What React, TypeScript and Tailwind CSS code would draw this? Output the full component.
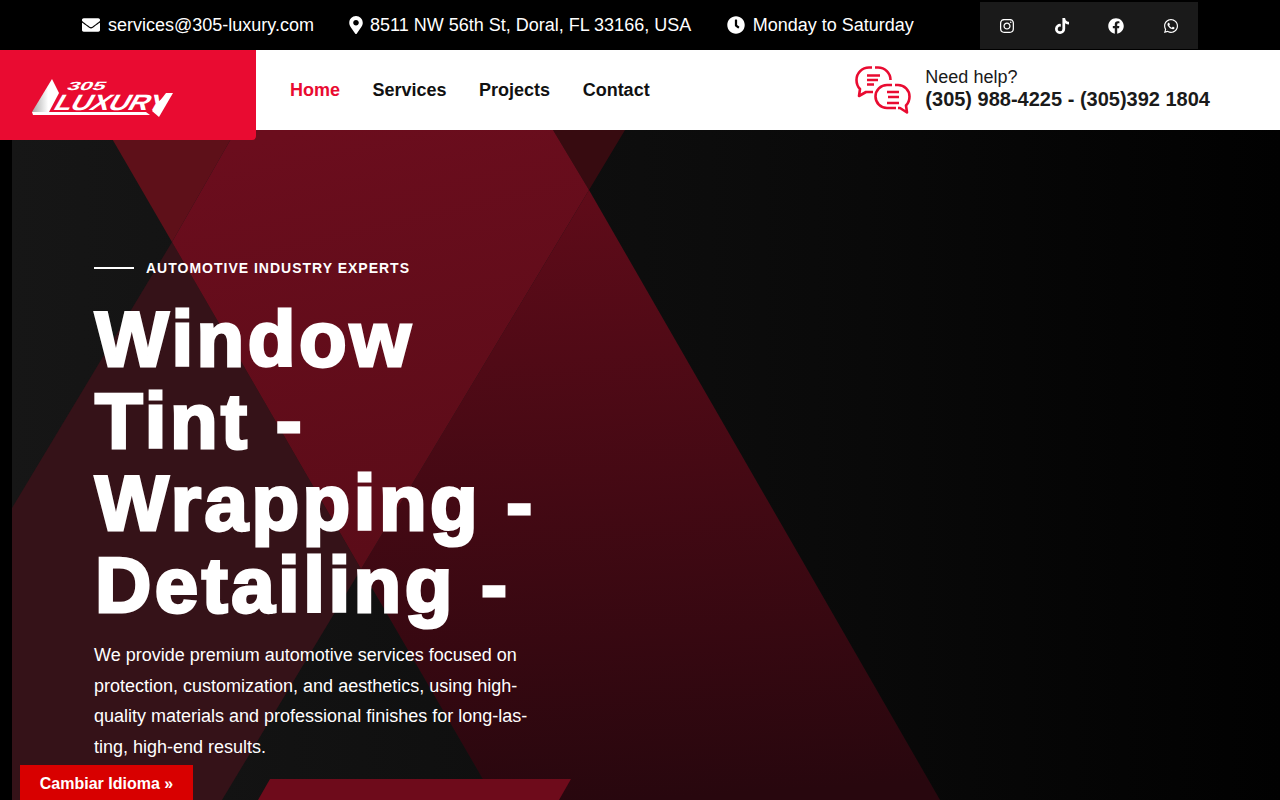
import { FaEnvelope, FaMapMarkerAlt, FaClock, FaInstagram, FaTiktok, FaFacebook, FaWhatsapp } from 'react-icons/fa'

const FONT = { fontFamily: '"Liberation Sans", Arial, sans-serif' }

const TOP_ITEMS = [
  { icon: FaEnvelope, text: 'services@305-luxury.com', gap: 'gap-2', extra: '' },
  { icon: FaMapMarkerAlt, text: '8511 NW 56th St, Doral, FL 33166, USA', gap: 'gap-[5.5px]', extra: '' },
  { icon: FaClock, text: 'Monday to Saturday', gap: 'gap-2', extra: 'ml-[3px]' },
]

const SOCIALS = [FaInstagram, FaTiktok, FaFacebook, FaWhatsapp]

const NAV = ['Home', 'Services', 'Projects', 'Contact']

// hero backdrop: two crossed triangles, painted region by region
function HeroBackdrop() {
  return (
    <svg className="absolute inset-0 w-full h-full" viewBox="0 130 1280 670" preserveAspectRatio="none">
      <defs>
        <linearGradient id="base" gradientUnits="userSpaceOnUse" x1="12" y1="0" x2="1280" y2="0">
          <stop offset="0" stopColor="#161616" />
          <stop offset="0.55" stopColor="#0c0c0c" />
          <stop offset="1" stopColor="#010101" />
        </linearGradient>
        <linearGradient id="center" gradientUnits="userSpaceOnUse" x1="300" y1="130" x2="400" y2="569">
          <stop offset="0" stopColor="#6b0d1d" />
          <stop offset="1" stopColor="#5a0c18" />
        </linearGradient>
        <linearGradient id="lower" gradientUnits="userSpaceOnUse" x1="600" y1="190" x2="640" y2="800">
          <stop offset="0" stopColor="#5f0b19" />
          <stop offset="1" stopColor="#28070e" />
        </linearGradient>
      </defs>
      <rect x="12" y="130" width="1268" height="670" fill="url(#base)" />
      <polygon points="107,130 236,130 172,242" fill="#5e1019" />
      <polygon points="553,130 625,130 589,190" fill="#370b10" />
      <polygon points="172,242 361,569 222,800 12,800 12,508" fill="#351218" />
      <polygon points="589,190 940,800 495,800 361,569" fill="url(#lower)" />
      <polygon points="236,130 553,130 589,190 361,569 172,242" fill="url(#center)" />
      <polygon points="270,779 571,779 559,800 258,800" fill="#6e0b1b" />
    </svg>
  )
}

function Logo() {
  return (
    <div className="relative w-[142px] h-[40px] font-bold text-white leading-none">
      <svg className="absolute inset-0" width="142" height="40" viewBox="0 0 142 40">
        <defs>
          <linearGradient id="chrome" x1="0" y1="0" x2="1" y2="0">
            <stop offset="0" stopColor="#a8a8a8" />
            <stop offset="0.6" stopColor="#ffffff" />
          </linearGradient>
        </defs>
        <polygon points="0,33 20,0 27,14 17,33" fill="url(#chrome)" />
        <polygon points="0,33 114,33 118,36 1,36" fill="#ffffff" />
        <polygon points="120,32 134,14 141,14 127,38" fill="#ffffff" />
      </svg>
      <span className="absolute left-[36px] top-[1px] text-[12px] origin-left [transform:skewX(-30deg)_scaleX(1.9)]">305</span>
      <span className="absolute left-[24px] top-[13px] text-[22px] font-black tracking-[-0.5px] origin-left [transform:skewX(-30deg)_scaleX(1.28)]">LUXURY</span>
    </div>
  )
}

function ChatIcon() {
  return (
    <svg width="56" height="48" viewBox="0 0 56 48" fill="none" stroke="#e90b31" strokeWidth="2.6" strokeLinecap="butt" strokeLinejoin="round">
      <path d="M17 1.5h-3A12.5 12.5 0 0 0 1.500 14c0 4 1.500 7 3.500 9l-1 7 7-4h7" />
      <path d="M20 1.5h3A12.500 12.500 0 0 1 35.500 14" />
      <path d="M12 9.500h13M12 14h11M12 18.500h7" />
      <path d="M37 19h-5A11.500 11.500 0 0 0 32 42h9" />
      <path d="M40 19h3A11.500 11.500 0 0 1 54.500 30.500c0 4-1.500 7-3.500 9l1 7-7-4.500h-2" />
      <path d="M32 26h12M33 31h11M32 37h12" />
    </svg>
  )
}

export default function App() {
  return (
    <div className="w-[1280px] h-[800px] overflow-hidden bg-black" style={FONT}>
      <div className="h-[50px] flex items-center pl-[82px] text-white text-[18px]">
        <div className="flex items-center gap-[32.5px] w-[898px]">
          {TOP_ITEMS.map(({ icon: Icon, text, gap, extra }) => (
            <div key={text} className={`flex items-center ${gap} ${extra}`}>
              <Icon size={18} />
              <span>{text}</span>
            </div>
          ))}
        </div>
        <div className="w-[218px] h-[47px] mt-[1px] bg-[#1a1a1a] flex items-center justify-around">
          {SOCIALS.map((Icon, i) => (
            <Icon key={i} size={16} />
          ))}
        </div>
      </div>

      <div className="relative h-[750px]">
        <div className="relative h-[80px] bg-white flex items-center pl-[290px] pr-[70px] z-10">
          <div className="absolute left-0 top-0 w-[256px] h-[90px] bg-[#e90b31] rounded-br flex items-start pt-[29px] pl-[32px]">
            <Logo />
          </div>
          <nav className="flex items-center gap-[32.5px] text-[18px] font-bold text-[#111]">
            {NAV.map((n, i) => (
              <span key={n} className={i === 0 ? 'text-[#e90b31]' : ''}>{n}</span>
            ))}
          </nav>
          <div className="ml-auto flex items-center gap-[14px]">
            <ChatIcon />
            <div className="text-[#1a1a1a] mb-[2px]">
              <div className="text-[18px] leading-[20px]">Need help?</div>
              <div className="text-[20px] leading-[24px] font-bold">(305) 988-4225 - (305)392 1804</div>
            </div>
          </div>
        </div>

        <section className="absolute left-0 right-0 top-[80px] bottom-0">
          <HeroBackdrop />
          <div className="relative pl-[94px] pt-[128px] text-white w-[560px]">
            <div className="flex items-center gap-3">
              <span className="w-10 h-[2px] mb-[2px] bg-white" />
              <span className="text-[14px] font-bold tracking-[1px]">AUTOMOTIVE INDUSTRY EXPERTS</span>
            </div>
            <h1 className="mt-[19px] ml-[1px] text-[78px] leading-[82px] font-black tracking-[3.5px] [-webkit-text-stroke:3px_white]">
              Window
              <br />
              Tint -
              <br />
              Wrapping -
              <br />
              Detailing -
            </h1>
            <p className="mt-[14px] w-[440px] text-[18px] leading-[30.6px]">
              We provide premium automotive services focused on protection, customization, and aesthetics, using high-quality materials and professional finishes for long-las-ting, high-end results.
            </p>
          </div>
        </section>
      </div>

      <div className="fixed left-[20px] bottom-0 w-[173px] h-[35px] pt-[2px] bg-[#d80000] text-white text-[16px] font-bold flex items-center justify-center">
        Cambiar Idioma »
      </div>
    </div>
  )
}
